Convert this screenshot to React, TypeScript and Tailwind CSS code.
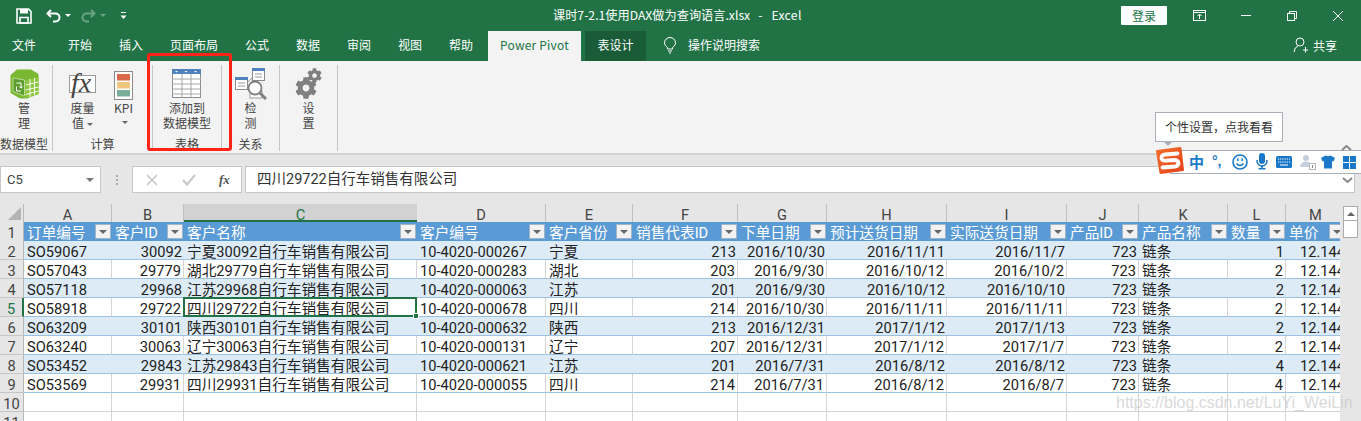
import React from "react";
import { FaCog } from "react-icons/fa";

const UI = "font-['Noto_Sans_CJK_SC','Microsoft_YaHei',sans-serif]";
const CELL = "font-['Roboto','Noto_Sans_CJK_SC',sans-serif]";

const tabs = [
  ["文件", "w-[53px] pl-[12px]"],
  ["开始", "w-[48px] text-center"],
  ["插入", "w-[48px] text-center"],
  ["页面布局", "w-[72px] text-center"],
  ["公式", "w-[48px] text-center"],
  ["数据", "w-[48px] text-center"],
  ["审阅", "w-[48px] text-center"],
  ["视图", "w-[48px] text-center"],
  ["帮助", "w-[48px] text-center"],
];

const letters = ["A", "B", "C", "D", "E", "F", "G", "H", "I", "J", "K", "L", "M"];
const headers = ["订单编号", "客户ID", "客户名称", "客户编号", "客户省份", "销售代表ID", "下单日期", "预计送货日期", "实际送货日期", "产品ID", "产品名称", "数量", "单价"];
const rightCols = new Set([1, 5, 6, 7, 8, 9, 11]);

const rows: string[][] = [
  ["SO59067", "30092", "宁夏30092自行车销售有限公司", "10-4020-000267", "宁夏", "213", "2016/10/30", "2016/11/11", "2016/11/7", "723", "链条", "1"],
  ["SO57043", "29779", "湖北29779自行车销售有限公司", "10-4020-000283", "湖北", "203", "2016/9/30", "2016/10/12", "2016/10/2", "723", "链条", "2"],
  ["SO57118", "29968", "江苏29968自行车销售有限公司", "10-4020-000063", "江苏", "201", "2016/9/30", "2016/10/12", "2016/10/10", "723", "链条", "2"],
  ["SO58918", "29722", "四川29722自行车销售有限公司", "10-4020-000678", "四川", "214", "2016/10/30", "2016/11/11", "2016/11/11", "723", "链条", "2"],
  ["SO63209", "30101", "陕西30101自行车销售有限公司", "10-4020-000632", "陕西", "213", "2016/12/31", "2017/1/12", "2017/1/13", "723", "链条", "2"],
  ["SO63240", "30063", "辽宁30063自行车销售有限公司", "10-4020-000131", "辽宁", "207", "2016/12/31", "2017/1/12", "2017/1/7", "723", "链条", "2"],
  ["SO53452", "29843", "江苏29843自行车销售有限公司", "10-4020-000621", "江苏", "201", "2016/7/31", "2016/8/12", "2016/8/12", "723", "链条", "4"],
  ["SO53569", "29931", "四川29931自行车销售有限公司", "10-4020-000055", "四川", "214", "2016/7/31", "2016/8/12", "2016/8/7", "723", "链条", "4"],
];

function Group({ width, label, labelClass = "", children }: { width: string; label?: string; labelClass?: string; children: React.ReactNode }) {
  return (
    <div className={`${width} h-[86px] flex flex-col border-r border-[#c6c6c6] shrink-0`}>
      <div className="flex-1 flex justify-center">{children}</div>
      <div className={`h-[14px] leading-[14px] text-center text-[12px] text-[#444] whitespace-nowrap ${labelClass}`}>{label}</div>
    </div>
  );
}

function RibbonBtn({ icon, lines, caret }: { icon: React.ReactNode; lines: string[]; caret?: boolean }) {
  return (
    <div className="flex flex-col items-center pt-[2px] text-[12px] leading-[15px] text-[#444]">
      <div className="h-[33px] flex items-center justify-center">{icon}</div>
      {lines.map((l, i) => (
        <div key={i} className="whitespace-nowrap">
          {l}
          {caret && i === lines.length - 1 ? <Caret /> : null}
        </div>
      ))}
    </div>
  );
}

function Caret() {
  return <span className="inline-block align-middle ml-[3px] w-0 h-0 border-x-[3px] border-x-transparent border-t-[3px] border-t-[#666]" />;
}

function FilterBtn() {
  return (
    <div className="absolute right-[1px] top-[2px] w-[16px] h-[15px] bg-[#f2f2f2] border border-[#a0b4c8] flex items-center justify-center">
      <span className="w-0 h-0 border-x-[4px] border-x-transparent border-t-[4px] border-t-[#666]" />
    </div>
  );
}

function ManageIcon() {
  return (
    <svg width="29" height="30" viewBox="0 0 29 30">
      <path d="M0.5 6 L7 0.5 H21 L28.5 5 V25 L17 29.5 H10 L0.5 24 Z" fill="#7ab733" />
      <path d="M3 9 L14.5 11 V27 L3 22.5 Z" fill="#5e9e2e" stroke="#cfe6b0" strokeWidth="0.8" />
      <path d="M15.5 11 L28.5 8 V25 L15.5 29 Z" fill="#8cc63f" />
      <path d="M20 10 V28 M24.5 9 V26.5 M15.5 16 L28.5 13 M15.5 21 L28.5 18 M15.5 25.5 L28.5 22" stroke="#f0f7e4" strokeWidth="1.1" />
      <path d="M6.5 14 H11 V19 M9.5 17.5 L11 19.2 L12.5 17.5 M11 22 H6.5 V17.5" stroke="#fff" strokeWidth="1" fill="none" />
    </svg>
  );
}

function KpiIcon() {
  return (
    <svg width="19" height="29" viewBox="0 0 19 29">
      <rect x="0.5" y="0.5" width="18" height="28" fill="#fff" stroke="#8a8a8a" />
      <rect x="3" y="3" width="13" height="6.5" fill="#d9694a" />
      <rect x="3" y="11" width="13" height="6.5" fill="#efc67f" />
      <rect x="3" y="19" width="13" height="6.5" fill="#7aae9b" />
    </svg>
  );
}

function TableIcon() {
  return (
    <svg width="29" height="29" viewBox="0 0 29 29">
      <rect x="0.5" y="0.5" width="28" height="28" fill="#fff" stroke="#8c8c8c" />
      <rect x="0" y="0" width="29" height="5" fill="#4f81bd" />
      <path d="M3 2 l1.5 1.5 1.5-1.5z M12.5 2 l1.5 1.5 1.5-1.5z M22 2 l1.5 1.5 1.5-1.5z" fill="#fff" />
      <path d="M0 10 H29 M0 15 H29 M0 20 H29 M0 25 H29 M10 5 V29 M19 5 V29" stroke="#a6a6a6" strokeWidth="1" />
    </svg>
  );
}

function DetectIcon() {
  return (
    <svg width="32" height="32" viewBox="0 0 32 32">
      <rect x="17.5" y="0.5" width="12" height="12" fill="#fff" stroke="#8a8a8a" />
      <rect x="17" y="0" width="13" height="3" fill="#4f81bd" />
      <path d="M20 6 h7 M20 9 h7" stroke="#9a9a9a" />
      <rect x="0.5" y="9.5" width="12" height="12" fill="#fff" stroke="#8a8a8a" />
      <rect x="0" y="9" width="13" height="3" fill="#4f81bd" />
      <path d="M3 15 h7 M3 18 h7" stroke="#9a9a9a" />
      <path d="M13 14 L17 10" stroke="#9a9a9a" />
      <rect x="15" y="23" width="12" height="7" fill="#fff" stroke="#9a9a9a" />
      <circle cx="20" cy="20" r="6.5" fill="#fff" stroke="#7f7f7f" strokeWidth="1.8" />
      <path d="M25 25 L31 31" stroke="#7f7f7f" strokeWidth="3" />
    </svg>
  );
}

function Row1Icons() {
  return (
    <div className="flex items-center w-[553px] pl-[16px]">
      <svg width="16" height="16" viewBox="0 0 16 16" fill="none" stroke="#fff" strokeWidth="1.6">
        <path d="M1 1 H12.5 L15 3.5 V15 H1 Z" />
        <rect x="4" y="1" width="8" height="4.5" fill="#fff" stroke="none" />
        <rect x="4" y="9.5" width="8" height="5.5" />
      </svg>
      <svg className="ml-[14px]" width="15" height="14" viewBox="0 0 15 14" fill="none" stroke="#fff" strokeWidth="2">
        <path d="M5 1 L1.5 4.5 L5 8" />
        <path d="M2 4.5 H9.5 A4 4 0 0 1 9.5 12.5 H7" />
      </svg>
      <span className="ml-[4px] w-0 h-0 border-x-[3px] border-x-transparent border-t-[3px] border-t-white" />
      <svg className="ml-[10px]" width="15" height="14" viewBox="0 0 15 14" fill="none" stroke="#6ba384" strokeWidth="2">
        <path d="M10 1 L13.5 4.5 L10 8" />
        <path d="M13 4.5 H5.5 A4 4 0 0 0 5.5 12.5 H8" />
      </svg>
      <span className="ml-[4px] w-0 h-0 border-x-[3px] border-x-transparent border-t-[3px] border-t-[#6ba384]" />
      <svg className="ml-[14px]" width="7" height="8" viewBox="0 0 7 8" fill="#fff">
        <rect x="1" y="0" width="5" height="1" />
        <path d="M0.5 3.5 H6.5 L3.5 7 Z" />
      </svg>
    </div>
  );
}

function WindowButtons() {
  return (
    <div className="ml-auto flex items-center">
      <div className="w-[46px] h-[19px] bg-white rounded-[1px] text-[#217346] text-[12px] leading-[19px] text-center">登录</div>
      <svg className="ml-[26px]" width="13" height="11" viewBox="0 0 13 11" fill="none" stroke="#fff">
        <rect x="0.5" y="0.5" width="12" height="10" />
        <path d="M0.5 2.5 H12.5 M6.5 9 V4.5 M4.5 6 L6.5 4 L8.5 6" />
      </svg>
      <div className="ml-[35px] w-[10px] h-[1px] bg-white" />
      <svg className="ml-[36px]" width="10" height="10" viewBox="0 0 10 10" fill="none" stroke="#fff">
        <rect x="0.5" y="2.5" width="7" height="7" />
        <path d="M2.5 2.5 V0.5 H9.5 V7.5 H7.5" />
      </svg>
      <svg className="ml-[36px] mr-[18px]" width="10" height="10" viewBox="0 0 10 10" fill="none" stroke="#fff">
        <path d="M0 0 L10 10 M10 0 L0 10" />
      </svg>
    </div>
  );
}

function ImeBar() {
  return (
    <>
      <div className={`absolute left-[1155px] top-[112px] w-[128px] h-[30px] bg-white border border-[#a9afb8] text-[12px] leading-[28px] text-center text-[#333] ${UI}`}>
        个性设置，点我看看
      </div>
      <div className="absolute left-[1163px] top-[141px] w-0 h-0 border-x-[5px] border-x-transparent border-t-[5px] border-t-[#a9afb8]" />
      <div className="absolute left-[1170px] top-[150px] w-[191px] h-[24px] bg-white border-y border-[#a9afb8]" />
      <svg className="absolute left-[1154px] top-[146px]" width="31" height="29" viewBox="0 0 31 29">
        <defs>
          <linearGradient id="sg" x1="0" y1="0" x2="1" y2="1">
            <stop offset="0" stopColor="#f4702c" />
            <stop offset="1" stopColor="#e2421a" />
          </linearGradient>
        </defs>
        <path d="M2 5 Q2 4 3 4 L26 1 Q27 1 27.5 2 L30 24 Q30 25 29 25 L7 28 Q6 28 5.5 27 Z" fill="url(#sg)" />
        <path d="M23.5 7.5 L11 8.5 Q7 9 7.5 12.5 Q8 15 12 14.6 L20 14 Q24 14 24.5 17 Q24.5 20 21 20.5 L8.5 21.5" fill="none" stroke="#fff" strokeWidth="3.8" strokeLinecap="round" />
      </svg>
      <div className={`absolute left-[1189px] top-[151px] text-[#1b78c9] font-bold text-[15px] leading-[22px] ${UI}`}>中</div>
      <div className="absolute left-[1212px] top-[150px] text-[#1b78c9] font-bold text-[14px] leading-[22px] font-['Liberation_Sans',sans-serif]">°,</div>
      <svg className="absolute left-[1232px] top-[154px]" width="16" height="16" viewBox="0 0 16 16" fill="none" stroke="#1b78c9" strokeWidth="1.6">
        <circle cx="8" cy="8" r="7" />
        <path d="M4.5 9.5 Q8 13.5 11.5 9.5" />
        <path d="M5.8 4.5 V7 M10.2 4.5 V7" />
      </svg>
      <svg className="absolute left-[1256px] top-[153px]" width="12" height="17" viewBox="0 0 12 17" fill="#1b78c9">
        <rect x="3" y="0" width="6" height="11" rx="3" />
        <path d="M1 7 V8 A5 5 0 0 0 11 8 V7" fill="none" stroke="#1b78c9" strokeWidth="1.5" />
        <rect x="5.2" y="12" width="1.6" height="3" />
        <rect x="2.5" y="15" width="7" height="1.5" />
      </svg>
      <svg className="absolute left-[1276px] top-[156px]" width="16" height="12" viewBox="0 0 16 12">
        <rect width="16" height="12" rx="1.5" fill="#1b78c9" />
        <path d="M2 3 H14 M2 6 H14" stroke="#fff" strokeDasharray="1.2 1" />
        <path d="M4 9 H12" stroke="#fff" />
      </svg>
      <svg className="absolute left-[1300px] top-[154px]" width="16" height="16" viewBox="0 0 16 16">
        <circle cx="6" cy="4" r="3" fill="#c3cedd" />
        <path d="M0 13 Q1 7.5 6 7.5 Q10 7.5 11 10 V13 Z" fill="#c3cedd" />
        <rect x="9.5" y="9.5" width="6" height="6" fill="#fff" stroke="#bbb" />
        <rect x="12" y="11" width="1" height="3" fill="#888" />
      </svg>
      <svg className="absolute left-[1321px] top-[155px]" width="14" height="14" viewBox="0 0 14 14" fill="#1b78c9">
        <path d="M4.5 0.5 Q7 2 9.5 0.5 L14 3 L12.5 6.5 L11 6 V13.5 H3 V6 L1.5 6.5 L0 3 Z" />
      </svg>
      <div className="absolute left-[1343px] top-[156px] grid grid-cols-2 gap-[1px] w-[13px]">
        <div className="h-[6px] bg-[#1b78c9]" />
        <div className="h-[6px] bg-[#1b78c9]" />
        <div className="h-[6px] bg-[#1b78c9]" />
        <div className="h-[6px] bg-[#1b78c9]" />
      </div>
      <svg className="absolute left-[1341px] top-[145px]" width="11" height="6" viewBox="0 0 11 6" fill="none" stroke="#8a8a8a" strokeWidth="2">
        <path d="M1 5 L5.5 1 L10 5" />
      </svg>
      <svg className="absolute left-[1342px] top-[177px]" width="11" height="6" viewBox="0 0 11 6" fill="none" stroke="#8a8a8a" strokeWidth="2">
        <path d="M1 1 L5.5 5 L10 1" />
      </svg>
    </>
  );
}

function Sheet() {
  return (
    <div className="flex bg-[#e6e6e6]">
      <div className={`w-[1340px] h-[217px] overflow-hidden bg-white ${CELL}`}>
        <div className="w-[1346px] grid grid-cols-[24px_88px_72px_233px_129px_87px_105px_89px_120px_120px_72px_89px_58px_60px] grid-rows-[18px] auto-rows-[19px] text-[14.67px] text-[#222]">
          {/* column letters */}
          <div className="bg-[#e6e6e6] border-r border-[#b8b8b8] flex items-end justify-end p-[2px]">
            <span className="w-0 h-0 border-l-[13px] border-l-transparent border-b-[13px] border-b-[#b4b4b4]" />
          </div>
          {letters.map((l, i) => (
            <div
              key={l}
              className={
                i === 2
                  ? "bg-[#d2d2d2] border-b-2 border-[#217346] text-[#217346] text-center leading-[23px]"
                  : "bg-[#e6e6e6] border-r border-[#c0c0c0] text-[#444] text-center leading-[23px]"
              }
            >
              {l}
            </div>
          ))}
          {/* table head */}
          <div className="bg-[#e6e6e6] border-r border-[#b8b8b8] text-center text-[#444] leading-[22px]">1</div>
          {headers.map((h) => (
            <div key={h} className="relative bg-[#5b9bd5] text-white pl-[3px] h-[19px] leading-[22px] whitespace-nowrap overflow-hidden">
              {h}
              <FilterBtn />
            </div>
          ))}
          {/* data rows */}
          {rows.map((r, ri) => {
            const n = ri + 2;
            const band = ri % 2 === 0;
            const active = n === 5;
            return (
              <React.Fragment key={n}>
                <div
                  className={
                    active
                      ? "h-[19px] bg-[#e1e1e1] border-r-2 border-[#217346] border-b border-b-[#c6c6c6] text-center text-[#217346] leading-[23px]"
                      : "h-[19px] bg-[#e6e6e6] border-r border-[#b8b8b8] border-b border-b-[#c6c6c6] text-center text-[#444] leading-[23px]"
                  }
                >
                  {n}
                </div>
                {r.map((c, ci) => (
                  <div
                    key={ci}
                    className={`relative h-[19px] leading-[23px] whitespace-nowrap border-b border-[#9bc2e6] ${
                      band ? "bg-[#ddebf7]" : "bg-white border-r border-r-[#d4d4d4]"
                    } ${rightCols.has(ci) ? "text-right pr-[2px]" : "pl-[3px]"}`}
                  >
                    {c}
                    {active && ci === 2 ? (
                      <div className="absolute left-[-1px] top-[-1px] w-[234px] h-[20px] border-2 border-[#217346] z-10">
                        <span className="absolute right-[-4px] bottom-[-4px] w-[6px] h-[6px] bg-[#217346] border border-white" />
                      </div>
                    ) : null}
                  </div>
                ))}
                <div className={`h-[19px] leading-[23px] whitespace-nowrap overflow-hidden border-b border-[#9bc2e6] pl-[14px] ${band ? "bg-[#ddebf7]" : "bg-white"}`}>12.1445</div>
              </React.Fragment>
            );
          })}
          {/* empty rows */}
          {[10, 11].map((n) => (
            <React.Fragment key={n}>
              <div className="h-[19px] bg-[#e6e6e6] border-r border-[#b8b8b8] border-b border-b-[#c6c6c6] text-center text-[#444] leading-[23px]">{n}</div>
              {letters.map((l) => (
                <div key={l} className="bg-white border-r border-b border-[#d4d4d4]" />
              ))}
            </React.Fragment>
          ))}
        </div>
      </div>
      <div className="ml-[3px] w-[15px] pt-[2px] flex flex-col">
        <div className="h-[15px] bg-white border border-[#ababab] flex items-center justify-center">
          <span className="w-0 h-0 border-x-[4px] border-x-transparent border-b-[4px] border-b-[#666]" />
        </div>
        <div className="h-[17px] bg-white border-x border-b border-[#ababab]" />
      </div>
    </div>
  );
}

export default function App() {
  return (
    <div className={`relative w-[1361px] h-[421px] overflow-hidden bg-[#e6e6e6] ${UI}`}>
      {/* title bar */}
      <div className="h-[31px] bg-[#217346] flex items-center text-white text-[12px]">
        <Row1Icons />
        <div className="flex whitespace-nowrap text-[12.2px]">
          <span>课时7-2.1使用DAX做为查询语言.xlsx</span>
          <span className="ml-[8px]">-</span>
          <span className="ml-[9px] tracking-[0.3px]">Excel</span>
        </div>
        <WindowButtons />
      </div>

      {/* tabs */}
      <div className="h-[30px] bg-[#217346] flex items-stretch gap-[3px] text-white text-[12px] leading-[27px]">
        {tabs.map(([t, c]) => (
          <div key={t} className={c}>{t}</div>
        ))}
        <div className="w-[93px] bg-[#f3f3f3] text-[#217346] text-center tracking-[0.2px]">Power Pivot</div>
        <div className="w-[61px] ml-[1px] bg-[#1a5c38] text-center">表设计</div>
        <svg className="ml-[15px] mt-[6px] mb-auto" width="12" height="17" viewBox="0 0 12 17" fill="none" stroke="#fff">
          <path d="M3.5 12 V10.5 C1.5 9 0.5 7.5 0.5 5.8 A5.5 5.3 0 0 1 11.5 5.8 C11.5 7.5 10.5 9 8.5 10.5 V12 Z" />
          <path d="M4 14 H8 M5 16 H7" />
        </svg>
        <div className="ml-[9px]">操作说明搜索</div>
        <div className="ml-auto mr-[24px] flex items-center gap-[5px] pb-[2px]">
          <svg width="15" height="16" viewBox="0 0 15 16" fill="none" stroke="#fff">
            <circle cx="7" cy="5" r="4" />
            <path d="M1 15 Q1.5 10 5 9 M12.5 10 V15.5 M10 13 H15" />
          </svg>
          <span>共享</span>
        </div>
      </div>

      {/* ribbon */}
      <div className="h-[94px] bg-[#f3f3f3] border-b-2 border-[#d4d4d4] flex items-start pt-[4px] box-border">
        <Group width="w-[53px]" label="数据模型" labelClass="pr-[5px]">
          <div className="-ml-[4px]">
            <RibbonBtn icon={<ManageIcon />} lines={["管", "理"]} />
          </div>
        </Group>
        <Group width="w-[100px]" label="计算">
          <div className="flex w-full gap-[18px] pl-[16px]">
            <RibbonBtn
              lines={["度量", "值"]}
              caret
              icon={
                <div className="relative w-[27px] h-[18px] bg-white border border-[#9a9a9a]">
                  <span className="absolute left-[1px] top-[-9px] font-['Liberation_Serif',serif] italic text-[28px] leading-[32px] text-[#444] whitespace-nowrap">
                    fx
                  </span>
                </div>
              }
            />
            <div className="flex flex-col items-center pt-[2px] text-[12px] leading-[15px] text-[#444]">
              <div className="h-[33px] flex items-start pt-[4px]"><KpiIcon /></div>
              <div>KPI</div>
              <div className="h-[15px] flex items-center"><Caret /></div>
            </div>
          </div>
        </Group>
        <Group width="w-[69px]" label="表格">
          <RibbonBtn icon={<TableIcon />} lines={["添加到", "数据模型"]} />
        </Group>
        <Group width="w-[58px]" label="关系">
          <RibbonBtn icon={<DetectIcon />} lines={["检", "测"]} />
        </Group>
        <Group width="w-[58px]">
          <RibbonBtn
            lines={["设", "置"]}
            icon={
              <div className="relative w-[27px] h-[31px] text-[#7f7f7f]">
                <FaCog size={22} className="absolute left-0 bottom-0" />
                <FaCog size={15} className="absolute right-0 top-0" />
              </div>
            }
          />
        </Group>
      </div>

      {/* formula bar */}
      <div className="h-[49px] pt-[11px] flex items-start text-[#444]">
        <div className={`w-[101px] h-[27px] bg-white border border-[#c6c6c6] flex items-center justify-between pl-[6px] pr-[6px] text-[13px] ${CELL}`}>
          C5
          <span className="w-0 h-0 border-x-[4px] border-x-transparent border-t-[4px] border-t-[#777]" />
        </div>
        <div className="w-[31px] h-[27px] flex flex-col items-center justify-center gap-[2px]">
          <span className="w-[2px] h-[2px] bg-[#aaa]" />
          <span className="w-[2px] h-[2px] bg-[#aaa]" />
          <span className="w-[2px] h-[2px] bg-[#aaa]" />
        </div>
        <div className="w-[110px] h-[27px] bg-white border border-[#c6c6c6] flex items-center pl-[13px]">
          <svg width="12" height="12" viewBox="0 0 12 12" stroke="#c6c6c6" strokeWidth="1.6" fill="none">
            <path d="M1 1 L11 11 M11 1 L1 11" />
          </svg>
          <svg className="ml-[24px]" width="14" height="12" viewBox="0 0 14 12" stroke="#c6c6c6" strokeWidth="2" fill="none">
            <path d="M1 6 L5 10.5 L13 1" />
          </svg>
          <span className="ml-[23px] font-['Liberation_Serif',serif] italic font-bold text-[13px] text-[#555]">fx</span>
        </div>
        <div className="ml-[3px] w-[1110px] h-[27px] bg-white border border-[#c6c6c6] pl-[11px] text-[14.5px] leading-[22px] text-[#333]">
          <span className={CELL}>四川29722自行车销售有限公司</span>
        </div>
      </div>

      <Sheet />

      {/* red annotation */}
      <div className="absolute left-[147px] top-[53px] w-[85px] h-[98px] border-[3px] border-[#ff2318] rounded-[3px]" />

      <ImeBar />

      {/* watermark */}
      <div className="absolute left-[1116px] top-[393px] text-[16px] leading-[20px] text-[#c8c8c8]/70 font-['Liberation_Sans',sans-serif] whitespace-nowrap">
        https://blog.csdn.net/LuYi_WeiLin
      </div>
    </div>
  );
}
